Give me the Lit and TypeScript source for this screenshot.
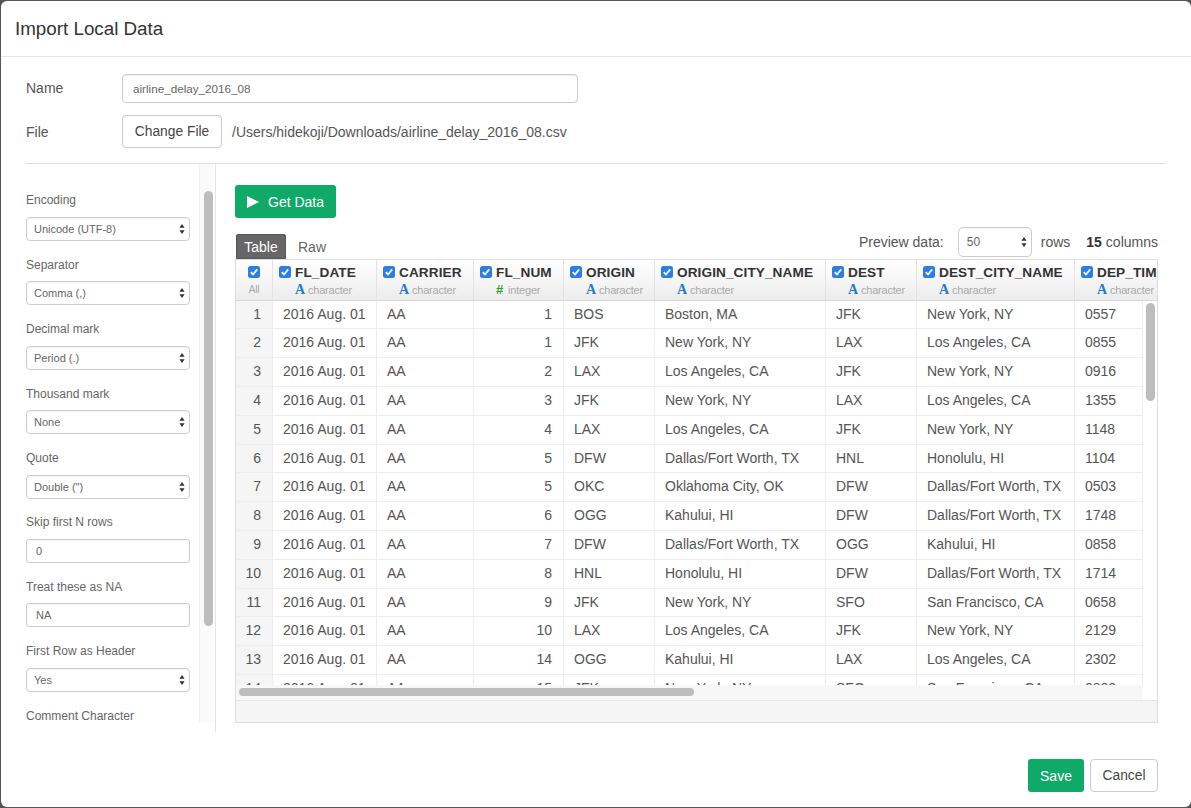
import { LitElement, html, css } from "lit";
import { customElement } from "lit/decorators.js";

const NY = "New York, NY", LA = "Los Angeles, CA", DA = "Dallas/Fort Worth, TX", KA = "Kahului, HI", HO = "Honolulu, HI", SF = "San Francisco, CA";
const rows: [number, string, string, string, string, string, string][] = [
  [1, "1", "BOS", "Boston, MA", "JFK", NY, "0557"],
  [2, "1", "JFK", NY, "LAX", LA, "0855"],
  [3, "2", "LAX", LA, "JFK", NY, "0916"],
  [4, "3", "JFK", NY, "LAX", LA, "1355"],
  [5, "4", "LAX", LA, "JFK", NY, "1148"],
  [6, "5", "DFW", DA, "HNL", HO, "1104"],
  [7, "5", "OKC", "Oklahoma City, OK", "DFW", DA, "0503"],
  [8, "6", "OGG", KA, "DFW", DA, "1748"],
  [9, "7", "DFW", DA, "OGG", KA, "0858"],
  [10, "8", "HNL", HO, "DFW", DA, "1714"],
  [11, "9", "JFK", NY, "SFO", SF, "0658"],
  [12, "10", "LAX", LA, "JFK", NY, "2129"],
  [13, "14", "OGG", KA, "LAX", LA, "2302"],
  [14, "15", "JFK", NY, "SFO", SF, "0803"],
];
const cols: [string, "c" | "i"][] = [
  ["FL_DATE", "c"], ["CARRIER", "c"], ["FL_NUM", "i"], ["ORIGIN", "c"],
  ["ORIGIN_CITY_NAME", "c"], ["DEST", "c"], ["DEST_CITY_NAME", "c"], ["DEP_TIME", "c"],
];
const fields: [string, string, boolean][] = [
  ["Encoding", "Unicode (UTF-8)", true],
  ["Separator", "Comma (,)", true],
  ["Decimal mark", "Period (.)", true],
  ["Thousand mark", "None", true],
  ["Quote", "Double (\")", true],
  ["Skip first N rows", "0", false],
  ["Treat these as NA", "NA", false],
  ["First Row as Header", "Yes", true],
  ["Comment Character", "", false],
];

const check = html`<svg class="cb" viewBox="0 0 12 12" width="12" height="12"><rect width="12" height="12" rx="2.5" fill="#2a7fe6"/><path d="M2.8 6.2 5 8.5 9.2 3.4" fill="none" stroke="#fff" stroke-width="1.8"/></svg>`;
const arrows = html`<svg class="arr" viewBox="0 0 6 10" width="6" height="10"><path d="M3 0 5.6 3.8H.4zM3 10 .4 6.2h5.2z" fill="#333"/></svg>`;

@customElement("app-root")
export class AppRoot extends LitElement {
  static styles = css`
    :host { display: block; width: 1191px; height: 808px; background: #555; font-family: "Liberation Sans", Arial, sans-serif; color: #555; overflow: hidden; }
    .modal { box-sizing: border-box; width: 1190px; height: 806px; margin: 1px 0 0 1px; background: #fff; border-radius: 6px; display: flex; flex-direction: column; }
    .head { height: 56px; flex: none; box-sizing: border-box; border-bottom: 1px solid #e5e5e5; padding: 0 0 0 14px; display: flex; align-items: center; font-size: 18.8px; color: #333; }
    .body { padding: 17px 26px 0 25px; flex: none; }
    .row { display: flex; align-items: center; }
    .row label { width: 96px; font-size: 14px; color: #555; }
    .name { height: 29px; margin-bottom: 12px; }
    .name label { padding-bottom: 2px; }
    .name input { box-sizing: border-box; width: 456px; height: 29px; border: 1px solid #ccc; border-radius: 4px; padding: 0 10px; font: 11.7px "Liberation Sans", Arial, sans-serif; color: #666; box-shadow: inset 0 1px 1px rgba(0,0,0,.06); outline: none; }
    .file { height: 33px; padding-bottom: 15px; border-bottom: 1px solid #ddd; }
    .btn { box-sizing: border-box; border: 1px solid #ccc; border-radius: 4px; background: #fff; color: #444; font: 13.8px "Liberation Sans", Arial, sans-serif; display: flex; align-items: center; justify-content: center; padding: 0; }
    .change { width: 100px; height: 33px; }
    .path { margin-left: 10px; font-size: 14px; color: #555; }
    .panes { display: flex; height: 568px; }
    .left { width: 190px; box-sizing: border-box; border-right: 1px solid #e4e4e4; position: relative; flex: none; height: 568px; }
    .clip { height: 558px; overflow: hidden; padding-top: 28px; box-sizing: border-box; }
    .field { height: 64.4px; width: 164px; }
    .field .lbl { height: 16px; line-height: 16px; font-size: 12px; color: #666; padding-top: .45px; margin-bottom: 8.55px; white-space: nowrap; }
    .sel, .txt { box-sizing: border-box; height: 24px; width: 164px; border: 1px solid #ccc; border-radius: 4px; background: #fff; display: flex; align-items: center; font-size: 11px; color: #666; position: relative; box-shadow: inset 0 1px 1px rgba(0,0,0,.04); }
    .sel { padding-left: 7px; }
    .txt { padding-left: 9px; border-radius: 3px; }
    .arr { position: absolute; right: 4px; top: 50%; margin-top: -5px; }
    .vtrack { position: absolute; right: 2px; top: 0; width: 14px; height: 558px; background: #fafafa; border-left: 1px solid #f0f0f0; box-sizing: border-box; }
    .vthumb { position: absolute; left: 4px; top: 27px; width: 9px; height: 435px; border-radius: 5px; background: #bdbdbd; }
    .right { flex: none; width: 923px; margin-left: 19px; padding-top: 21px; }
    .get { box-sizing: border-box; width: 101px; height: 33px; background: #0fa968; color: #fff; border: 0; border-radius: 3px; display: flex; align-items: center; font: 14px "Liberation Sans", Arial, sans-serif; padding: 0 0 0 12px; gap: 9px; }
    .bar { display: flex; align-items: flex-end; height: 41px; box-sizing: border-box; }
    .tab { box-sizing: border-box; margin-left: 1px; width: 50px; height: 25px; background: #666; border-radius: 2px 2px 0 0; color: #fff; font-size: 14px; display: flex; align-items: center; justify-content: center; border: 1px solid #555; }
    .raw { margin-left: 12px; font-size: 14px; color: #666; height: 25px; display: flex; align-items: center; }
    .prev { margin-left: auto; display: flex; align-items: center; height: 30px; font-size: 14px; color: #555; margin-bottom: 2px; }
    .prev .sel { width: 74px; height: 30px; margin: 0 9px 0 14px; padding-left: 8px; font-size: 12px; border-radius: 5px; }
    .prev b { margin-left: 16px; margin-right: 4px; color: #333; }
    .tbl { box-sizing: border-box; width: 923px; height: 464px; border: 1px solid #ddd; background: #f5f5f5; position: relative; overflow: hidden; }
    .grid { display: grid; grid-template-columns: 37px 104px 97px 90px 91px 171px 91px 158px 83px; }
    .view { height: 425px; overflow: hidden; background: #fff; }
    .hc { box-sizing: border-box; height: 40.6px; background: linear-gradient(#fff, #ececec); border-right: 1px solid #e2e2e2; border-bottom: 1px solid #d8d8d8; padding: 5px 0 0 6px; overflow: hidden; white-space: nowrap; }
    .hc.last { border-right: 0; }
    .hc .t { display: flex; align-items: center; gap: 4px; font-weight: bold; font-size: 13.6px; color: #333; height: 14px; letter-spacing: .1px; }
    .cb { flex: none; }
    .hc .s { font-size: 11px; color: #aaa; margin: 3px 0 0 16px; letter-spacing: -.2px; }
    .hc .s i { font-style: normal; font-weight: bold; margin-right: 3px; }
    .a { font-family: "Liberation Serif", serif; color: #1d7bd0; font-size: 14px; }
    .h { color: #2ca02c; font-size: 13px; margin-right: 5px !important; }
    .hc.all { padding: 5px 0 0 0; }
    .all .t { justify-content: center; }
    .hc.all .s { font-size: 10px; margin: 5px 0 0; text-align: center; }
    .c { box-sizing: border-box; height: 28.8px; line-height: 26px; font-size: 14px; color: #555; border-right: 1px solid #eee; border-bottom: 1.5px solid #eee; padding: 0 10px; overflow: hidden; white-space: nowrap; }
    .c.last { border-right: 0; }
    .c.num { text-align: right; padding-right: 11px; }
    .c.idx { text-align: right; background: #f5f5f5; padding: 0 11px 0 0; }
    .hbar { position: absolute; left: 0; right: 0; top: 425px; height: 15px; background: #f7f7f7; border-bottom: 1px solid #e6e6e6; }
    .hthumb { position: absolute; left: 3px; top: 3px; width: 455px; height: 8px; border-radius: 4px; background: #bdbdbd; }
    .corner { position: absolute; right: 0; top: 0; width: 15px; height: 15px; background: #fff; }
    .sb { position: absolute; right: 0; top: 41px; width: 15px; height: 384px; background: #fff; border-left: 1px solid #eee; box-sizing: border-box; }
    .sbt { position: absolute; left: 3px; top: 2px; width: 9px; height: 98px; border-radius: 5px; background: #bdbdbd; }
    .foot { flex: 1; display: flex; justify-content: flex-end; align-items: flex-start; gap: 6px; padding: 27px 33px 0 0; }
    .save { box-sizing: border-box; width: 56px; height: 33px; background: #0fa968; border: 0; border-radius: 3px; color: #fff; font: 14px "Liberation Sans", Arial, sans-serif; }
    .cancel { width: 68px; height: 33px; }
  `;

  render() {
    return html`<div class="modal">
      <div class="head">Import Local Data</div>
      <div class="body">
        <div class="row name"><label>Name</label><input value="airline_delay_2016_08" /></div>
        <div class="row file"><label>File</label><button class="btn change">Change File</button><span class="path">/Users/hidekoji/Downloads/airline_delay_2016_08.csv</span></div>
        <div class="panes">
          <div class="left">
            <div class="clip">
              ${fields.map(([l, v, s]) => html`<div class="field"><div class="lbl">${l}</div>${s ? html`<div class="sel">${v}${arrows}</div>` : html`<div class="txt">${v}</div>`}</div>`)}
            </div>
            <div class="vtrack"><div class="vthumb"></div></div>
          </div>
          <div class="right">
            <button class="get"><svg viewBox="0 0 12 12" width="12" height="12"><path d="M0 0 12 6 0 12z" fill="#fff"/></svg>Get Data</button>
            <div class="bar">
              <div class="tab">Table</div><div class="raw">Raw</div>
              <div class="prev">Preview data:<div class="sel">50${arrows}</div>rows<b>15</b>columns</div>
            </div>
            <div class="tbl">
              <div class="view">
                <div class="grid">
                  <div class="hc all"><div class="t">${check}</div><div class="s">All</div></div>
                  ${cols.map(([n, k], i) => html`<div class="hc ${i === cols.length - 1 ? "last" : ""}"><div class="t">${check}${n}</div><div class="s">${k === "c" ? html`<i class="a">A</i>character` : html`<i class="h">#</i>integer`}</div></div>`)}
                  ${rows.map((r) => html`
                    <div class="c idx">${r[0]}</div>
                    <div class="c">2016 Aug. 01</div>
                    <div class="c">AA</div>
                    <div class="c num">${r[1]}</div>
                    <div class="c">${r[2]}</div>
                    <div class="c">${r[3]}</div>
                    <div class="c">${r[4]}</div>
                    <div class="c">${r[5]}</div>
                    <div class="c last">${r[6]}</div>`)}
                </div>
              </div>
              <div class="sb"><div class="sbt"></div></div>
              <div class="hbar"><div class="hthumb"></div><div class="corner"></div></div>
            </div>
          </div>
        </div>
      </div>
      <div class="foot"><button class="save">Save</button><button class="btn cancel">Cancel</button></div>
    </div>`;
  }
}
